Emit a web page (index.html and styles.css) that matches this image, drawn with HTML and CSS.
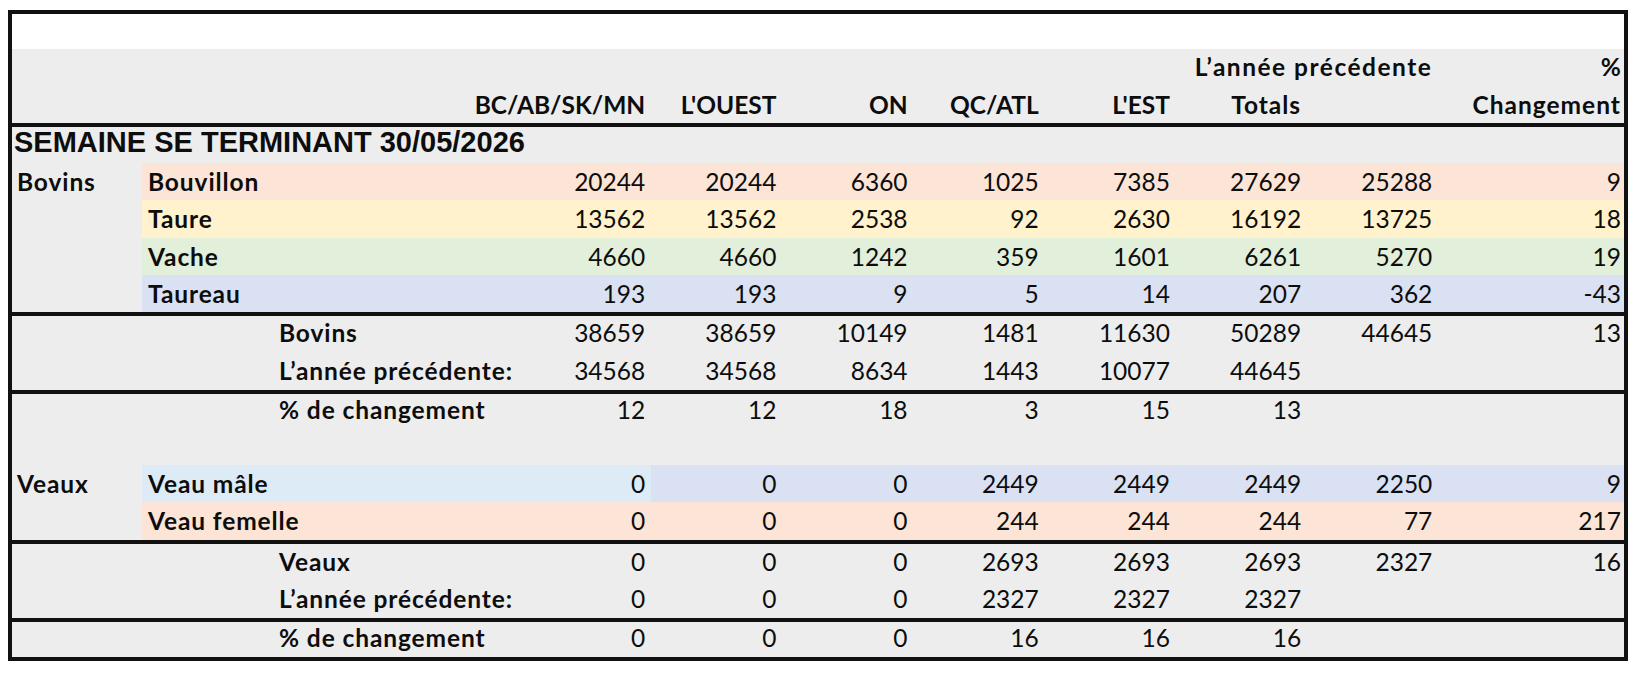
FILE: index.html
```html
<!DOCTYPE html>
<html lang="fr">
<head>
<meta charset="utf-8">
<title>Abattage hebdomadaire</title>
<link rel="stylesheet" href="styles.css">
</head>
<body>
<div class="sheet">
  <div class="top"></div>
  <div class="head">
    <div class="row hrow">
      <div class="c"></div><div class="c"></div><div class="c"></div>
      <div class="c"></div><div class="c"></div><div class="c"></div><div class="c"></div><div class="c"></div><div class="c"></div>
      <div class="c n b wide">L’année précédente</div>
      <div class="c n b last">%</div>
    </div>
    <div class="row hrow hrow2">
      <div class="c"></div><div class="c"></div><div class="c"></div>
      <div class="c n b">BC/AB/SK/MN</div>
      <div class="c n b">L'OUEST</div>
      <div class="c n b">ON</div>
      <div class="c n b">QC/ATL</div>
      <div class="c n b">L'EST</div>
      <div class="c n b sp">Totals</div>
      <div class="c"></div>
      <div class="c n b last sp">Changement</div>
    </div>
  </div>

  <div class="sec">
    <div class="title">SEMAINE SE TERMINANT 30/05/2026</div>
    <div class="row r-peach">
      <div class="c grp">Bovins</div>
      <div class="c lab span2">Bouvillon</div>
      <div class="c n">20244</div><div class="c n">20244</div><div class="c n">6360</div><div class="c n">1025</div><div class="c n">7385</div><div class="c n">27629</div><div class="c n">25288</div><div class="c n last">9</div>
    </div>
    <div class="row r-yellow h38">
      <div class="c grp"></div>
      <div class="c lab span2">Taure</div>
      <div class="c n">13562</div><div class="c n">13562</div><div class="c n">2538</div><div class="c n">92</div><div class="c n">2630</div><div class="c n">16192</div><div class="c n">13725</div><div class="c n last">18</div>
    </div>
    <div class="row r-green">
      <div class="c grp"></div>
      <div class="c lab span2">Vache</div>
      <div class="c n">4660</div><div class="c n">4660</div><div class="c n">1242</div><div class="c n">359</div><div class="c n">1601</div><div class="c n">6261</div><div class="c n">5270</div><div class="c n last">19</div>
    </div>
    <div class="row r-blue">
      <div class="c grp"></div>
      <div class="c lab span2">Taureau</div>
      <div class="c n">193</div><div class="c n">193</div><div class="c n">9</div><div class="c n">5</div><div class="c n">14</div><div class="c n">207</div><div class="c n">362</div><div class="c n last">-43</div>
    </div>
  </div>

  <div class="sec">
    <div class="row up2">
      <div class="c"></div><div class="c"></div>
      <div class="c lab">Bovins</div>
      <div class="c n">38659</div><div class="c n">38659</div><div class="c n">10149</div><div class="c n">1481</div><div class="c n">11630</div><div class="c n">50289</div><div class="c n">44645</div><div class="c n last">13</div>
    </div>
    <div class="row up1">
      <div class="c"></div><div class="c"></div>
      <div class="c lab clip">L’année précédente:</div>
      <div class="c n">34568</div><div class="c n">34568</div><div class="c n">8634</div><div class="c n">1443</div><div class="c n">10077</div><div class="c n">44645</div><div class="c"></div><div class="c"></div>
    </div>
  </div>

  <div class="sec">
    <div class="row up3">
      <div class="c"></div><div class="c"></div>
      <div class="c lab">% de changement</div>
      <div class="c n">12</div><div class="c n">12</div><div class="c n">18</div><div class="c n">3</div><div class="c n">15</div><div class="c n">13</div><div class="c"></div><div class="c"></div>
    </div>
    <div class="row h34"></div>
    <div class="row r-blue">
      <div class="c grp">Veaux</div>
      <div class="c lab span2 lightblue">Veau mâle</div>
      <div class="c n lightblue">0</div><div class="c n">0</div><div class="c n">0</div><div class="c n">2449</div><div class="c n">2449</div><div class="c n">2449</div><div class="c n">2250</div><div class="c n last">9</div>
    </div>
    <div class="row r-peach h38">
      <div class="c grp"></div>
      <div class="c lab span2">Veau femelle</div>
      <div class="c n">0</div><div class="c n">0</div><div class="c n">0</div><div class="c n">244</div><div class="c n">244</div><div class="c n">244</div><div class="c n">77</div><div class="c n last">217</div>
    </div>
  </div>

  <div class="sec">
    <div class="row up1">
      <div class="c"></div><div class="c"></div>
      <div class="c lab">Veaux</div>
      <div class="c n">0</div><div class="c n">0</div><div class="c n">0</div><div class="c n">2693</div><div class="c n">2693</div><div class="c n">2693</div><div class="c n">2327</div><div class="c n last">16</div>
    </div>
    <div class="row up1">
      <div class="c"></div><div class="c"></div>
      <div class="c lab clip">L’année précédente:</div>
      <div class="c n">0</div><div class="c n">0</div><div class="c n">0</div><div class="c n">2327</div><div class="c n">2327</div><div class="c n">2327</div><div class="c"></div><div class="c"></div>
    </div>
  </div>

  <div class="sec">
    <div class="row h35 up2">
      <div class="c"></div><div class="c"></div>
      <div class="c lab">% de changement</div>
      <div class="c n">0</div><div class="c n">0</div><div class="c n">0</div><div class="c n">16</div><div class="c n">16</div><div class="c n">16</div><div class="c"></div><div class="c"></div>
    </div>
  </div>
</div>
</body>
</html>
```

FILE: styles.css
```css
html, body {
  margin: 0;
  padding: 0;
  background: #ffffff;
}

body {
  font-family: Lato, "Open Sans", "Liberation Sans", sans-serif;
  font-size: 24.5px;
  color: #0d0d0d;
}

.sheet {
  margin: 10px 0 0 8px;
  width: 1612px;
  border: 4px solid #111111;
  background: #ededed;
}

.top {
  height: 35px;
  background: #ffffff;
}

.head {
  height: 74px;
  padding-top: 1px;
  box-sizing: border-box;
}

.row {
  display: grid;
  grid-template-columns: 130px 131px 247px repeat(7, 131.2px) 185.6px;
  height: 37px;
  line-height: 37px;
}

.hrow {
  height: 33px;
  line-height: 33px;
}

.hrow2 {
  margin-top: 5px;
}

.h38 { height: 38px; line-height: 38px; }
.h35 { height: 35px; line-height: 35px; }
.h34 { height: 34px; }

.up1 { line-height: 35px; }
.up2 { line-height: 33px; }
.up3 { line-height: 31px; }
.h35.up2 { line-height: 31px; }

.sec {
  border-top: 4px solid #111111;
}

.c {
  white-space: nowrap;
  min-width: 0;
}

.n {
  display: flex;
  justify-content: flex-end;
  padding-right: 6px;
}

.n.last {
  padding-right: 3px;
}

.b {
  font-weight: 700;
}

.sp {
  letter-spacing: 1px;
}

.wide {
  letter-spacing: 1.5px;
}

.title {
  height: 36px;
  line-height: 30px;
  padding-left: 2px;
  font-family: "Liberation Sans", Arial, sans-serif;
  font-weight: 700;
  font-size: 29px;
  white-space: nowrap;
}

.grp {
  font-weight: 700;
  padding-left: 5px;
  letter-spacing: 0.9px;
}

.lab {
  font-weight: 700;
  padding-left: 6px;
  letter-spacing: 0.9px;
}

.span2 {
  grid-column: span 2;
}

.clip {
  overflow: hidden;
  margin-right: 5px;
}

.r-peach > .c:not(.grp) { background: #fce4d6; }
.r-yellow > .c:not(.grp) { background: #fff2cc; }
.r-green > .c:not(.grp) { background: #e2efda; }
.r-blue > .c:not(.grp) { background: #d9e1f2; }
.r-blue > .c.lightblue { background: #ddebf7; }
```
